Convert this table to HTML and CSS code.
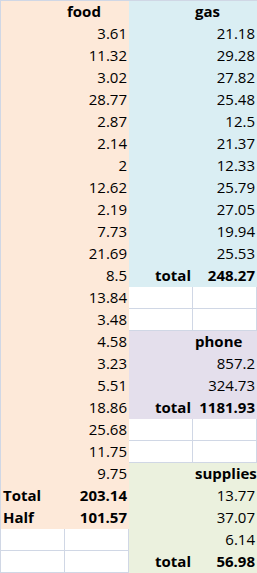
FILE: index.html
```html
<!DOCTYPE html>
<html>
<head>
<meta charset="utf-8">
<link rel="stylesheet" href="styles.css">
</head>
<body>
<div class="sheet">
<div class="c p"></div><div class="c p hd">food</div><div class="c b"></div><div class="c b hd">gas</div>
<div class="c p"></div><div class="c p n">3.61</div><div class="c b"></div><div class="c b n">21.18</div>
<div class="c p"></div><div class="c p n">11.32</div><div class="c b"></div><div class="c b n">29.28</div>
<div class="c p"></div><div class="c p n">3.02</div><div class="c b"></div><div class="c b n">27.82</div>
<div class="c p"></div><div class="c p n">28.77</div><div class="c b"></div><div class="c b n">25.48</div>
<div class="c p"></div><div class="c p n">2.87</div><div class="c b"></div><div class="c b n">12.5</div>
<div class="c p"></div><div class="c p n">2.14</div><div class="c b"></div><div class="c b n">21.37</div>
<div class="c p"></div><div class="c p n">2</div><div class="c b"></div><div class="c b n">12.33</div>
<div class="c p"></div><div class="c p n">12.62</div><div class="c b"></div><div class="c b n">25.79</div>
<div class="c p"></div><div class="c p n">2.19</div><div class="c b"></div><div class="c b n">27.05</div>
<div class="c p"></div><div class="c p n">7.73</div><div class="c b"></div><div class="c b n">19.94</div>
<div class="c p"></div><div class="c p n">21.69</div><div class="c b"></div><div class="c b n">25.53</div>
<div class="c p"></div><div class="c p n">8.5</div><div class="c b n bd">total</div><div class="c b n bd">248.27</div>
<div class="c p"></div><div class="c p n">13.84</div><div class="c w"></div><div class="c w"></div>
<div class="c p"></div><div class="c p n">3.48</div><div class="c w"></div><div class="c w"></div>
<div class="c p"></div><div class="c p n">4.58</div><div class="c v"></div><div class="c v hd">phone</div>
<div class="c p"></div><div class="c p n">3.23</div><div class="c v"></div><div class="c v n">857.2</div>
<div class="c p"></div><div class="c p n">5.51</div><div class="c v"></div><div class="c v n">324.73</div>
<div class="c p"></div><div class="c p n">18.86</div><div class="c v n bd">total</div><div class="c v n bd">1181.93</div>
<div class="c p"></div><div class="c p n">25.68</div><div class="c w"></div><div class="c w"></div>
<div class="c p"></div><div class="c p n">11.75</div><div class="c w"></div><div class="c w"></div>
<div class="c p"></div><div class="c p n">9.75</div><div class="c g"></div><div class="c g hd">supplies</div>
<div class="c p hd">Total</div><div class="c p n bd">203.14</div><div class="c g"></div><div class="c g n">13.77</div>
<div class="c p hd">Half</div><div class="c p n bd">101.57</div><div class="c g"></div><div class="c g n">37.07</div>
<div class="c w"></div><div class="c w"></div><div class="c g"></div><div class="c g n">6.14</div>
<div class="c w"></div><div class="c w"></div><div class="c g n bd">total</div><div class="c g n bd">56.98</div>
</div>
</body>
</html>
```
FILE: styles.css
```css
html, body {
  margin: 0;
  padding: 0;
  background: #ffffff;
}
.sheet {
  display: grid;
  grid-template-columns: repeat(4, 64px);
  grid-auto-rows: 22px;
  width: 256px;
  border-top: 1px solid #d0d7e5;
  border-left: 1px solid #d0d7e5;
  font-family: "Open Sans", "DejaVu Sans", sans-serif;
  font-size: 15px;
  color: #000;
}
.c {
  box-sizing: border-box;
  line-height: 20px;
  padding: 0 2px;
  white-space: nowrap;
  overflow: visible;
}
.w {
  border-right: 1px solid #d0d7e5;
  border-bottom: 1px solid #d0d7e5;
}
.p { background: #fde9d9; }
.b { background: #daeef3; }
.v { background: #e4dfec; }
.g { background: #ebf1de; }
.n { text-align: right; }
.hd { font-weight: 700; text-align: left; }
.bd { font-weight: 700; }
```
